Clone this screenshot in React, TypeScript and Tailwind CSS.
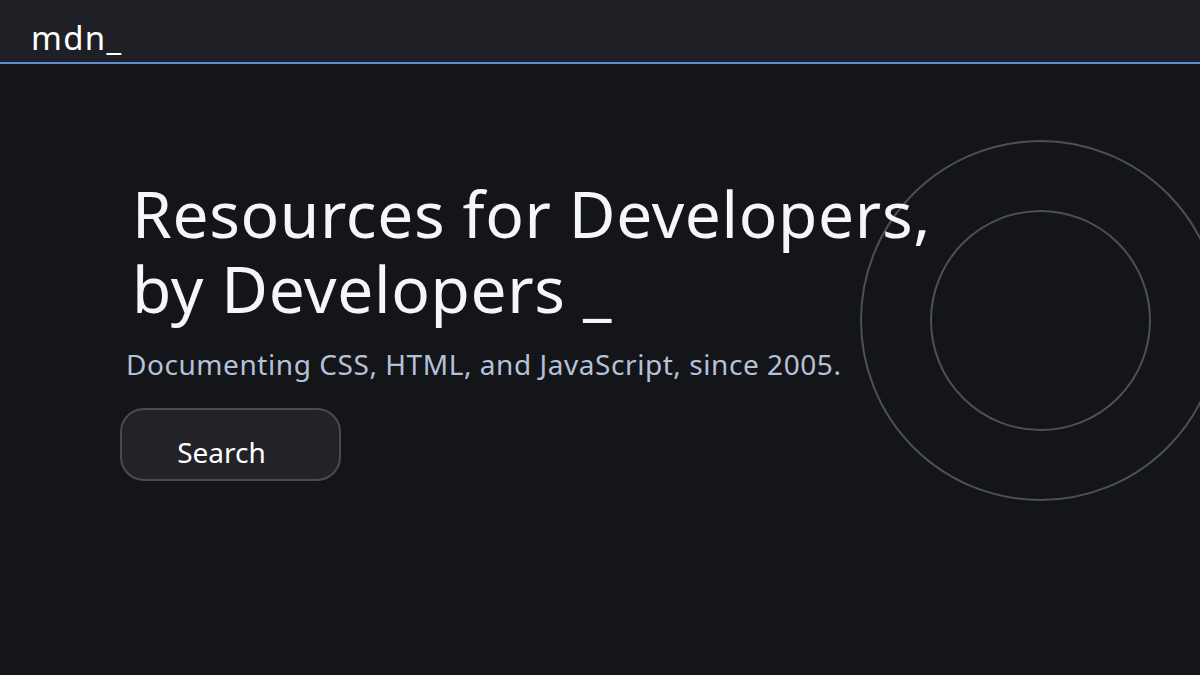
export default function App() {
  return (
    <div className="relative h-[675px] w-[1200px] overflow-hidden bg-[#141518] font-['Open_Sans',sans-serif] text-white">
      <header className="flex h-[64px] items-end border-b-2 border-[#5b8ed6] bg-[#1f2025] px-[31px]">
        <span className="pb-[2px] text-[33px] leading-[44px] tracking-[0.04em]">mdn_</span>
      </header>
      <div className="pointer-events-none absolute left-[860px] top-[140px] h-[361px] w-[361px] rounded-full border-2 border-[#4d4f5a]" />
      <div className="pointer-events-none absolute left-[930px] top-[210px] h-[221px] w-[221px] rounded-full border-2 border-[#4d4f5a]" />
      <main className="relative flex flex-col items-start px-[120px] pt-[112px]">
        <h1 className="pl-[12px] text-[64px] leading-[75px] tracking-[0.01em] text-[#f4f6fb]">
          Resources for Developers,
          <br />
          by Developers _
        </h1>
        <p className="mt-[18px] pl-[6px] text-[28px] leading-[40px] tracking-[0.02em] text-[#b5c1d8]">
          Documenting CSS, HTML, and JavaScript, since 2005.
        </p>
        <button className="mt-[24px] flex h-[73px] w-[221px] items-end justify-center rounded-[24px] border-2 border-[#4a4b50] bg-[#212328] pb-[6px] pr-[18px] text-[28px] text-white">
          Search
        </button>
      </main>
    </div>
  )
}
